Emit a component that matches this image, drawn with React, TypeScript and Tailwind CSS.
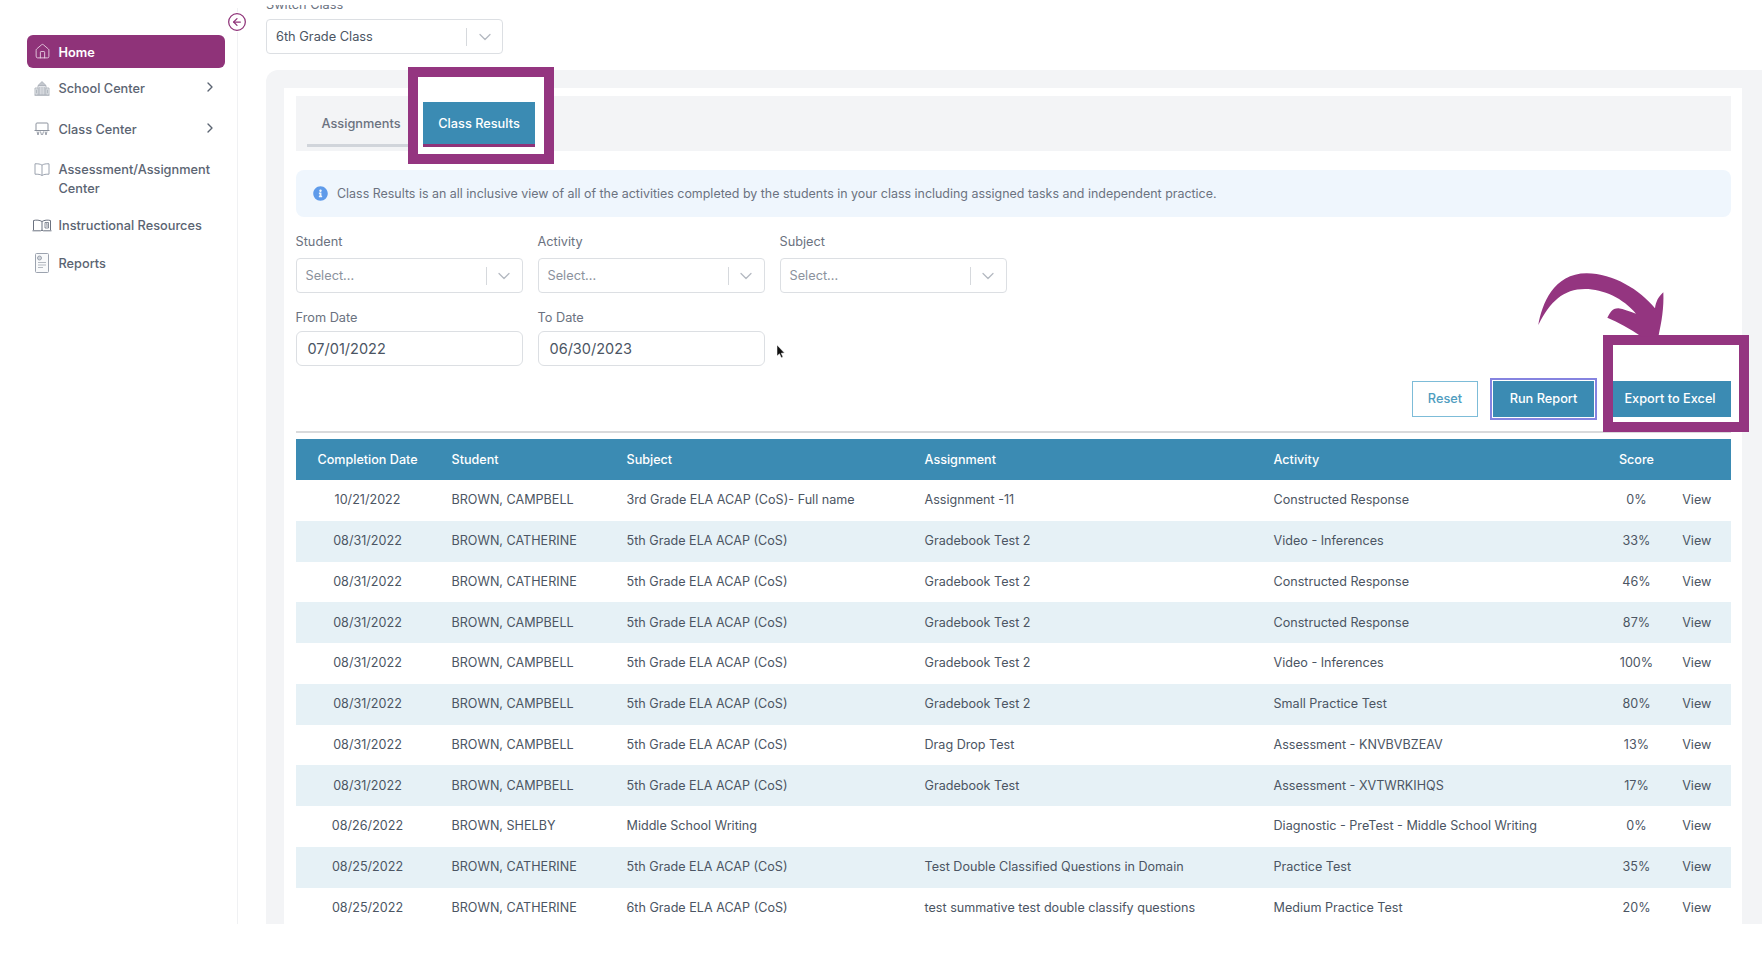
import React from "react";
import { ChevronDown, ChevronRight, CircleArrowLeft, House } from "lucide-react";
import { FaInfoCircle } from "react-icons/fa";

type Row = [string, string, string, string, string, string];

const rows: Row[] = [
  ["10/21/2022", "BROWN, CAMPBELL", "3rd Grade ELA ACAP (CoS)- Full name", "Assignment -11", "Constructed Response", "0%"],
  ["08/31/2022", "BROWN, CATHERINE", "5th Grade ELA ACAP (CoS)", "Gradebook Test 2", "Video - Inferences", "33%"],
  ["08/31/2022", "BROWN, CATHERINE", "5th Grade ELA ACAP (CoS)", "Gradebook Test 2", "Constructed Response", "46%"],
  ["08/31/2022", "BROWN, CAMPBELL", "5th Grade ELA ACAP (CoS)", "Gradebook Test 2", "Constructed Response", "87%"],
  ["08/31/2022", "BROWN, CAMPBELL", "5th Grade ELA ACAP (CoS)", "Gradebook Test 2", "Video - Inferences", "100%"],
  ["08/31/2022", "BROWN, CAMPBELL", "5th Grade ELA ACAP (CoS)", "Gradebook Test 2", "Small Practice Test", "80%"],
  ["08/31/2022", "BROWN, CAMPBELL", "5th Grade ELA ACAP (CoS)", "Drag Drop Test", "Assessment - KNVBVBZEAV", "13%"],
  ["08/31/2022", "BROWN, CAMPBELL", "5th Grade ELA ACAP (CoS)", "Gradebook Test", "Assessment - XVTWRKIHQS", "17%"],
  ["08/26/2022", "BROWN, SHELBY", "Middle School Writing", "", "Diagnostic - PreTest - Middle School Writing", "0%"],
  ["08/25/2022", "BROWN, CATHERINE", "5th Grade ELA ACAP (CoS)", "Test Double Classified Questions in Domain", "Practice Test", "35%"],
  ["08/25/2022", "BROWN, CATHERINE", "6th Grade ELA ACAP (CoS)", "test summative test double classify questions", "Medium Practice Test", "20%"],
];

const gridCols = "grid grid-cols-[144px_175px_298px_349px_349px_52px_68.5px] items-center";

const SchoolIcon = () => (
  <svg width="16" height="15" viewBox="0 0 16 15" fill="none" stroke="#aeb3bb" strokeWidth=".9">
    <path d="M8 .6 12 4.500H4z" fill="#c4c8ce" />
    <path d="M4 4.500h8V14H4z" fill="#e5e7eb" />
    <path d="M1 7h3v7H1zM12 7h3v7h-3z" fill="#eceef0" />
    <path d="M5.800 6v8M8 6v8M10.200 6v8M2.500 8.500v4M13.500 8.500v4M.5 14.300h15" />
  </svg>
);

const ClassIcon = () => (
  <svg width="16" height="14" viewBox="0 0 16 14" fill="none" stroke="#8d939e" strokeWidth="1">
    <path d="M2 8.500V2a1 1 0 0 1 1-1h10a1 1 0 0 1 1 1v6.500" />
    <path d="M.5 8.500h15" />
    <path d="M3 9.500l1 3.500M5 9.500l-1 3.500M6.500 9.500l1 3.500M9.500 9.500l-1 3.500M11 9.500l1 3.500M13 9.500l-1 3.500" strokeWidth=".9" />
  </svg>
);

const BookIcon = () => (
  <svg width="16" height="13" viewBox="0 0 16 13" fill="none" stroke="#9ca3af" strokeWidth="1">
    <path d="M8 2.200C6.500 1 4 .7 1 .8v10.400c3-.1 5.500.2 7 1.300 1.500-1.100 4-1.400 7-1.300V.8c-3-.1-5.500.2-7 1.400z" />
    <path d="M8 2.200v10.300" />
  </svg>
);

const ResourceIcon = () => (
  <svg width="20" height="13" viewBox="0 0 20 13" fill="none" stroke="#6b7280" strokeWidth="1">
    <path d="M1.500 11V1.500c3-.7 6-.5 8.500 1 2.500-1.500 5.500-1.700 8.500-1V11" />
    <path d="M10 2.500v9M.5 11.800h8l1.500-.6 1.500.6h8" />
    <path d="M13 3.500h3.500v5.500H13zM14.300 5l.7-.6v3.600" strokeWidth=".8" />
  </svg>
);

const ReportIcon = () => (
  <svg width="14" height="20" viewBox="0 0 14 20" fill="none" stroke="#9ca3af" strokeWidth="1">
    <path d="M.5 1.500a1 1 0 0 1 1-1h11a1 1 0 0 1 1 1v17a1 1 0 0 1-1 1h-11a1 1 0 0 1-1-1z" fill="#f9fafb" />
    <circle cx="4.500" cy="5" r="2" fill="#d1d5db" />
    <path d="M3 9.500h8M3 12h8M3 14.500h5" stroke="#b4b9c1" />
  </svg>
);

const NavItem = ({
  icon,
  children,
  chevron,
  className,
}: {
  icon: React.ReactNode;
  children: React.ReactNode;
  chevron?: boolean;
  className: string;
}) => (
  <div className={`flex items-center pl-[5px] pr-[7px] ${className}`}>
    <span className="flex w-[20px] shrink-0 justify-center">{icon}</span>
    <span className="ml-[6.5px] text-[12.75px] leading-[19px] font-medium text-[#5b6472]">{children}</span>
    {chevron && <ChevronRight size={16} strokeWidth={2} className="ml-auto -mt-[3px] text-[#5b6472]" />}
  </div>
);

const SelectBox = ({ text, width, color }: { text: string; width: string; color: string }) => (
  <div className={`flex h-[35px] shrink-0 items-center rounded border border-[#dcdfe3] bg-white ${width}`}>
    <span className={`flex-1 pl-[9px] text-[12.75px] ${color}`}>{text}</span>
    <span className="h-[18px] w-px bg-[#d6d9dd]" />
    <span className="flex w-[35px] justify-center">
      <ChevronDown size={20} strokeWidth={1.5} className="text-[#b4b9c1]" />
    </span>
  </div>
);

const Field = ({ label, children, gap }: { label: string; children: React.ReactNode; gap: string }) => (
  <div>
    <div className={`text-[12.75px] leading-[16px] text-[#6b7280] ${gap}`}>{label}</div>
    {children}
  </div>
);

const DateBox = ({ value }: { value: string }) => (
  <div className="flex h-[35px] items-center rounded-md border border-[#dcdfe3] bg-white pl-[11px] text-[14.5px] text-[#4b5563]">
    {value}
  </div>
);

export default function App() {
  return (
    <div className="relative h-[958px] w-full overflow-hidden bg-white font-['Inter',sans-serif]">
      <div className="flex h-[924px] overflow-hidden">
        {/* Sidebar */}
        <aside className="relative mt-[8px] w-[238px] shrink-0 border-r border-[#f0f1f3] pt-[27px] pl-[27px] pr-[12px]">
          <div className="flex h-[33px] items-center rounded-md bg-[#8f3379] pl-[5px]">
            <span className="flex w-[20px] justify-center">
              <House size={17} strokeWidth={1.2} className="text-[#ecd9e8]" />
            </span>
            <span className="mt-[2px] ml-[6.5px] text-[12.75px] font-semibold text-white">Home</span>
          </div>
          <NavItem icon={<SchoolIcon />} chevron className="h-[40px]">
            School Center
          </NavItem>
          <NavItem icon={<ClassIcon />} chevron className="h-[42px]">
            Class Center
          </NavItem>
          <NavItem icon={<BookIcon />} className="mt-[10px] !items-start [&>span:first-child]:mt-[3px]">
            Assessment/Assignment
            <br />
            Center
          </NavItem>
          <NavItem icon={<ResourceIcon />} className="mt-[18px]">
            Instructional Resources
          </NavItem>
          <NavItem icon={<ReportIcon />} className="mt-[18px]">
            Reports
          </NavItem>
          <button className="absolute top-[4px] right-[-10px] rounded-full bg-white text-[#8f3379]">
            <CircleArrowLeft size={20} strokeWidth={1.5} />
          </button>
        </aside>

        {/* Main */}
        <main className="flex min-w-0 flex-1 flex-col pl-[28px]">
          <div className="mt-[5px] h-[4px] shrink-0 overflow-hidden">
            <div className="-mt-[8px] text-[12.75px] leading-[16px] text-[#6b7280]">Switch Class</div>
          </div>
          <div className="mt-[10px] flex h-[35px] w-[237px] shrink-0 items-center rounded border border-[#dcdfe3] bg-white">
            <span className="flex-1 pt-px pl-[9px] text-[12.8px] text-[#4b5563]">6th Grade Class</span>
            <span className="h-[18px] w-px bg-[#d6d9dd]" />
            <span className="flex w-[35px] justify-center">
              <ChevronDown size={20} strokeWidth={1.5} className="text-[#b4b9c1]" />
            </span>
          </div>

          <div className="mt-[16px] flex-1 rounded-tl-xl bg-[#f3f4f6] pt-[18px] pr-[20px] pl-[18px]">
            <div className="h-full bg-white pt-[8px] pr-[11px] pl-[11.5px]">
              {/* Tabs */}
              <div className="flex h-[55px] items-start bg-[#f3f4f6] pt-[6px] pl-[11.5px]">
                <div className="flex h-[45px] w-[108px] items-center justify-center border-b-[3px] border-[#d1d5db] pt-[2px] text-[12.75px] font-medium text-[#6b7280]">
                  Assignments
                </div>
                <div className="relative z-10 ml-[8px] flex h-[45px] w-[112px] items-center justify-center border-b-[3px] border-[#8f3379] bg-[#3b8bb3] pt-[2px] text-[12.75px] font-medium text-white">
                  Class Results
                </div>
              </div>

              {/* Info */}
              <div className="mt-[19px] flex h-[47px] items-center rounded-lg bg-[#eff6fd] pl-[17px] text-[12.45px] text-[#6b7280]">
                <FaInfoCircle size={15} className="text-[#5f9bea]" />
                <span className="mt-px ml-[9.5px]">
                  Class Results is an all inclusive view of all of the activities completed by the students in your class
                  including assigned tasks and independent practice.
                </span>
              </div>

              {/* Filters */}
              <div className="mt-[17px] flex gap-x-[15px]">
                <Field label="Student" gap="mb-[8px]">
                  <SelectBox text="Select..." width="w-[227px]" color="text-[#8b929d]" />
                </Field>
                <Field label="Activity" gap="mb-[8px]">
                  <SelectBox text="Select..." width="w-[227px]" color="text-[#8b929d]" />
                </Field>
                <Field label="Subject" gap="mb-[8px]">
                  <SelectBox text="Select..." width="w-[227px]" color="text-[#8b929d]" />
                </Field>
              </div>
              <div className="mt-[17px] grid grid-cols-[227px_227px] gap-x-[15px]">
                <Field label="From Date" gap="mb-[5px]">
                  <DateBox value="07/01/2022" />
                </Field>
                <Field label="To Date" gap="mb-[5px]">
                  <DateBox value="06/30/2023" />
                </Field>
              </div>

              {/* Actions */}
              <div className="mt-[15px] flex h-[36px] justify-end text-[12.75px] font-medium">
                <button className="w-[66px] border border-[#7dbcd8] text-[#4f9dc0]">Reset</button>
                <button className="ml-[15px] w-[101px] bg-[#3b8bb3] text-white ring-2 ring-[#8583e0] ring-offset-1">
                  Run Report
                </button>
                <button className="ml-[15px] w-[122px] bg-[#3b8bb3] text-white">Export to Excel</button>
              </div>
              <div className="mt-[14px] h-[2px] bg-[#d9dadc]" />

              {/* Results */}
              <div className={`${gridCols} mt-[6px] h-[41px] bg-[#3b8bb3] pt-px text-[12.6px] font-medium text-white`}>
                <div className="text-center">Completion Date</div>
                <div className="pl-[12px]">Student</div>
                <div className="pl-[12px]">Subject</div>
                <div className="pl-[12px]">Assignment</div>
                <div className="pl-[12px]">Activity</div>
                <div className="text-center">Score</div>
                <div />
              </div>
              {rows.map((r, i) => (
                <div
                  key={i}
                  className={`${gridCols} h-[40.75px] pt-px text-[12.6px] text-[#4b5563] ${i % 2 === 1 ? "bg-[#e6f1f6]" : "bg-white"}`}
                >
                  <div className="text-center">{r[0]}</div>
                  <div className="pl-[12px]">{r[1]}</div>
                  <div className="pl-[12px]">{r[2]}</div>
                  <div className="pl-[12px]">{r[3]}</div>
                  <div className="pl-[12px]">{r[4]}</div>
                  <div className="text-center">{r[5]}</div>
                  <div className="text-center">View</div>
                </div>
              ))}
            </div>
          </div>
        </main>
      </div>

      {/* Annotations drawn over the screenshot */}
      <div className="absolute top-[67px] left-[408px] z-[5] h-[97px] w-[146px] border-[10px] border-[#943580] bg-white" />
      <div className="absolute top-[335px] left-[1603px] z-[5] h-[97px] w-[146px] border-[10px] border-[#943580]" />
      <svg className="absolute top-[265px] left-[1530px] z-[6]" width="150" height="80" viewBox="0 0 450 240">
        <path
          fill="#943580"
          d="M25 180C35 120 70 25 170 25C250 25 330 75 375 130C378 110 385 95 400 82C402 130 395 170 385 215L335 215C300 190 265 172 232 158C240 145 245 130 265 130C280 132 300 140 318 146C280 100 220 72 165 72C100 72 60 110 25 180Z"
        />
      </svg>
      <svg className="absolute top-[344px] left-[776px]" width="11" height="15" viewBox="0 0 11 15">
        <path fill="#111" stroke="#fff" strokeWidth=".5" d="M1 1v11l2.500-2.200 1.800 4 1.700-.8-1.800-3.800 3.300-.2z" />
      </svg>
    </div>
  );
}
